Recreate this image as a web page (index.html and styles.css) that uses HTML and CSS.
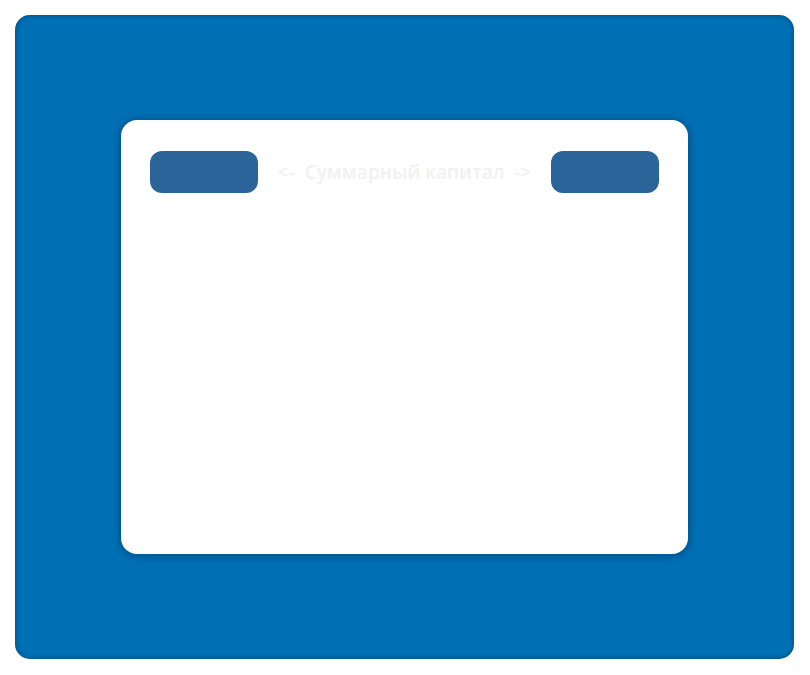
FILE: index.html
```html
<!DOCTYPE html>
<html lang="ru">
<head>
<meta charset="utf-8">
<link rel="stylesheet" href="styles.css">
</head>
<body>
<div class="frame">
  <div class="card">
    <div class="head">
      <div class="btn"></div>
      <div class="title">&lt;-&nbsp; Суммарный капитал &nbsp;-&gt;</div>
      <div class="btn"></div>
    </div>
  </div>
</div>
</body>
</html>
```
FILE: styles.css
```css
html, body { margin: 0; padding: 0; background: #ffffff; }
body { padding: 15px 0 0 15px; font-family: "Open Sans", "Liberation Sans", sans-serif; }
.frame {
  width: 779px;
  height: 644px;
  box-sizing: border-box;
  background: #0070b4;
  border-radius: 15px;
  box-shadow: inset 0 0 4px 1px rgba(0, 40, 80, 0.45);
  display: flex;
  align-items: center;
  justify-content: center;
}
.card {
  width: 567px;
  height: 434px;
  box-sizing: border-box;
  background: #ffffff;
  border-radius: 16px;
  box-shadow: 0 1px 7px 2px rgba(0, 40, 80, 0.4);
  padding: 31px 29px;
}
.head {
  display: flex;
  align-items: center;
  justify-content: space-between;
}
.btn {
  width: 108px;
  height: 42px;
  border-radius: 12px;
  background: #2a6499;
}
.title {
  color: #f1f1f1;
  font-size: 19px;
  font-weight: 600;
  white-space: nowrap;
}
```
